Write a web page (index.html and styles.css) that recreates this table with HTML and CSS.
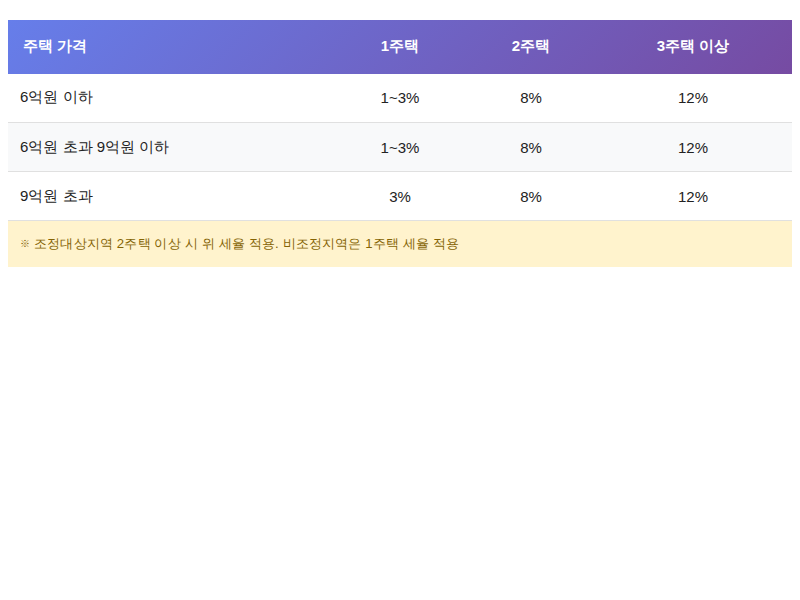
FILE: index.html
```html
<!DOCTYPE html>
<html lang="ko">
<head>
<meta charset="utf-8">
<link rel="stylesheet" href="styles.css">
</head>
<body>
<div class="wrap">
<table class="rates">
  <colgroup>
    <col class="c1"><col class="c2"><col class="c3"><col class="c4">
  </colgroup>
  <thead>
    <tr>
      <th class="left">주택 가격</th>
      <th>1주택</th>
      <th>2주택</th>
      <th>3주택 이상</th>
    </tr>
  </thead>
  <tbody>
    <tr>
      <td class="left">6억원 이하</td>
      <td>1~3%</td>
      <td>8%</td>
      <td>12%</td>
    </tr>
    <tr class="alt">
      <td class="left">6억원 초과 9억원 이하</td>
      <td>1~3%</td>
      <td>8%</td>
      <td>12%</td>
    </tr>
    <tr>
      <td class="left">9억원 초과</td>
      <td>3%</td>
      <td>8%</td>
      <td>12%</td>
    </tr>
  </tbody>
</table>
<div class="note"><span class="mark">※</span> 조정대상지역 2주택 이상 시 위 세율 적용. 비조정지역은 1주택 세율 적용</div>
</div>
</body>
</html>
```
FILE: styles.css
```css
body {
  margin: 0;
  padding: 20px 8px;
  font-family: Arial, "Liberation Sans", sans-serif;
  color: #222;
  background: #fff;
}
.wrap { width: 784px; }
.rates {
  width: 784px;
  border-collapse: collapse;
  table-layout: fixed;
  font-size: 15px;
}
.c1 { width: 324px; }
.c2 { width: 136px; }
.c3 { width: 126px; }
.c4 { width: 198px; }
.rates thead tr {
  background: linear-gradient(135deg, #667eea 0%, #764ba2 100%);
}
.rates th {
  color: #fff;
  font-weight: bold;
  height: 53.5px;
  padding: 0 15px;
  text-align: center;
  box-sizing: border-box;
}
.rates td {
  height: 49px;
  padding: 0 12px;
  text-align: center;
  border-bottom: 1px solid #e0e0e0;
  box-sizing: border-box;
}
.rates .left { text-align: left; }
.rates tr.alt td { background: #f8f9fa; }
.note {
  background: #fff3cd;
  color: #856404;
  font-size: 13.2px;
  letter-spacing: 0.15px;
  padding: 0 12px;
  height: 45.5px;
  display: flex;
  align-items: center;
}
.mark { font-size: 10px; margin-right: 4px; }
```
